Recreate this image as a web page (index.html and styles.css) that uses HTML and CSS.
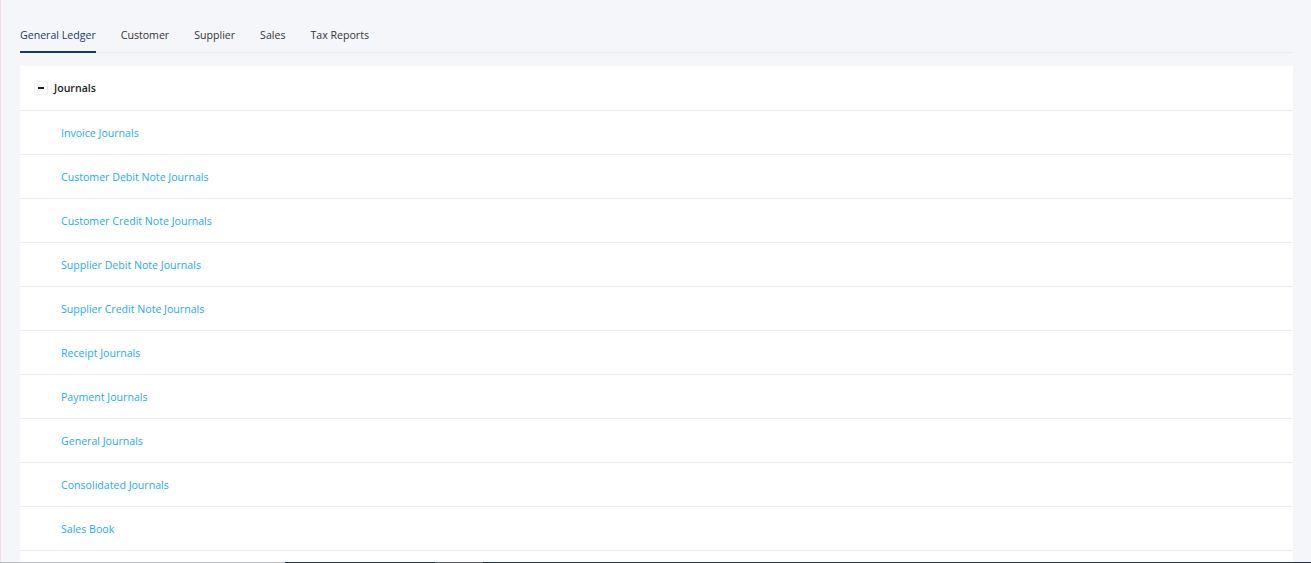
FILE: index.html
```html
<!DOCTYPE html>
<html lang="en">
<head>
    <meta charset="UTF-8">
    <meta name="viewport" content="width=device-width, initial-scale=1.0">
    <title>Reports</title>
    <link rel="stylesheet" href="styles.css">
</head>
<body>
    <div class="page">
        <ul class="tabs">
            <li class="tab active">General Ledger</li>
            <li class="tab">Customer</li>
            <li class="tab">Supplier</li>
            <li class="tab">Sales</li>
            <li class="tab">Tax Reports</li>
        </ul>
        <div class="card">
            <div class="group-head">
                <span class="toggle"><span class="minus"></span></span>
                <span class="group-title">Journals</span>
            </div>
            <div class="row"><a href="#">Invoice Journals</a></div>
            <div class="row"><a href="#">Customer Debit Note Journals</a></div>
            <div class="row"><a href="#">Customer Credit Note Journals</a></div>
            <div class="row"><a href="#">Supplier Debit Note Journals</a></div>
            <div class="row"><a href="#">Supplier Credit Note Journals</a></div>
            <div class="row"><a href="#">Receipt Journals</a></div>
            <div class="row"><a href="#">Payment Journals</a></div>
            <div class="row"><a href="#">General Journals</a></div>
            <div class="row"><a href="#">Consolidated Journals</a></div>
            <div class="row"><a href="#">Sales Book</a></div>
            <div class="row"></div>
        </div>
    </div>
    <div class="bottom-strip">
        <span class="strip-gray"></span>
        <span class="strip-dark"></span>
        <span class="strip-mid"></span>
        <span class="strip-dark grow"></span>
    </div>
</body>
</html>
```

FILE: styles.css
```css
html, body {
    margin: 0;
    padding: 0;
    height: 100%;
    overflow: hidden;
}
body {
    font-family: "Open Sans", "Noto Sans", sans-serif;
    font-size: 10.6px;
    background-color: #f5f6fa;
    border-left: 1px solid #f1dfe2;
}
.page {
    padding: 25px 18px 0 19px;
}
.tabs {
    list-style: none;
    margin: 0;
    padding: 0;
    display: flex;
    gap: 25px;
    border-bottom: 1px solid #e9ebef;
}
.tab {
    color: #333;
    line-height: 20px;
    padding-bottom: 6px;
    border-bottom: 2px solid transparent;
    margin-bottom: -1px;
}
.tab.active {
    color: #1b3768;
    border-bottom-color: #1b3768;
}
.card {
    margin-top: 13px;
    background-color: white;
}
.group-head {
    display: flex;
    align-items: center;
    gap: 6px;
    height: 44px;
    padding-left: 14px;
    border-bottom: 1px solid #ebedf0;
}
.toggle {
    width: 12px;
    height: 12px;
    border: 1px solid #eceef1;
    border-radius: 2px;
    display: flex;
    align-items: center;
    justify-content: center;
}
.minus {
    width: 6px;
    height: 2px;
    background-color: #222;
}
.group-title {
    color: #222;
    font-weight: 600;
}
.row {
    height: 43px;
    display: flex;
    align-items: center;
    padding-left: 41px;
    border-bottom: 1px solid #ebedf0;
}
.row a {
    color: #1eaaf1;
    text-decoration: none;
}
.bottom-strip {
    position: fixed;
    left: 0;
    right: 0;
    bottom: 0;
    height: 1px;
    display: flex;
}
.strip-gray {
    width: 285px;
    background-color: #b9bbbe;
}
.strip-dark {
    width: 150px;
    background-color: #1d3340;
}
.strip-mid {
    width: 48px;
    background-color: #4f5f68;
}
.strip-dark.grow {
    flex: 1;
}
```
